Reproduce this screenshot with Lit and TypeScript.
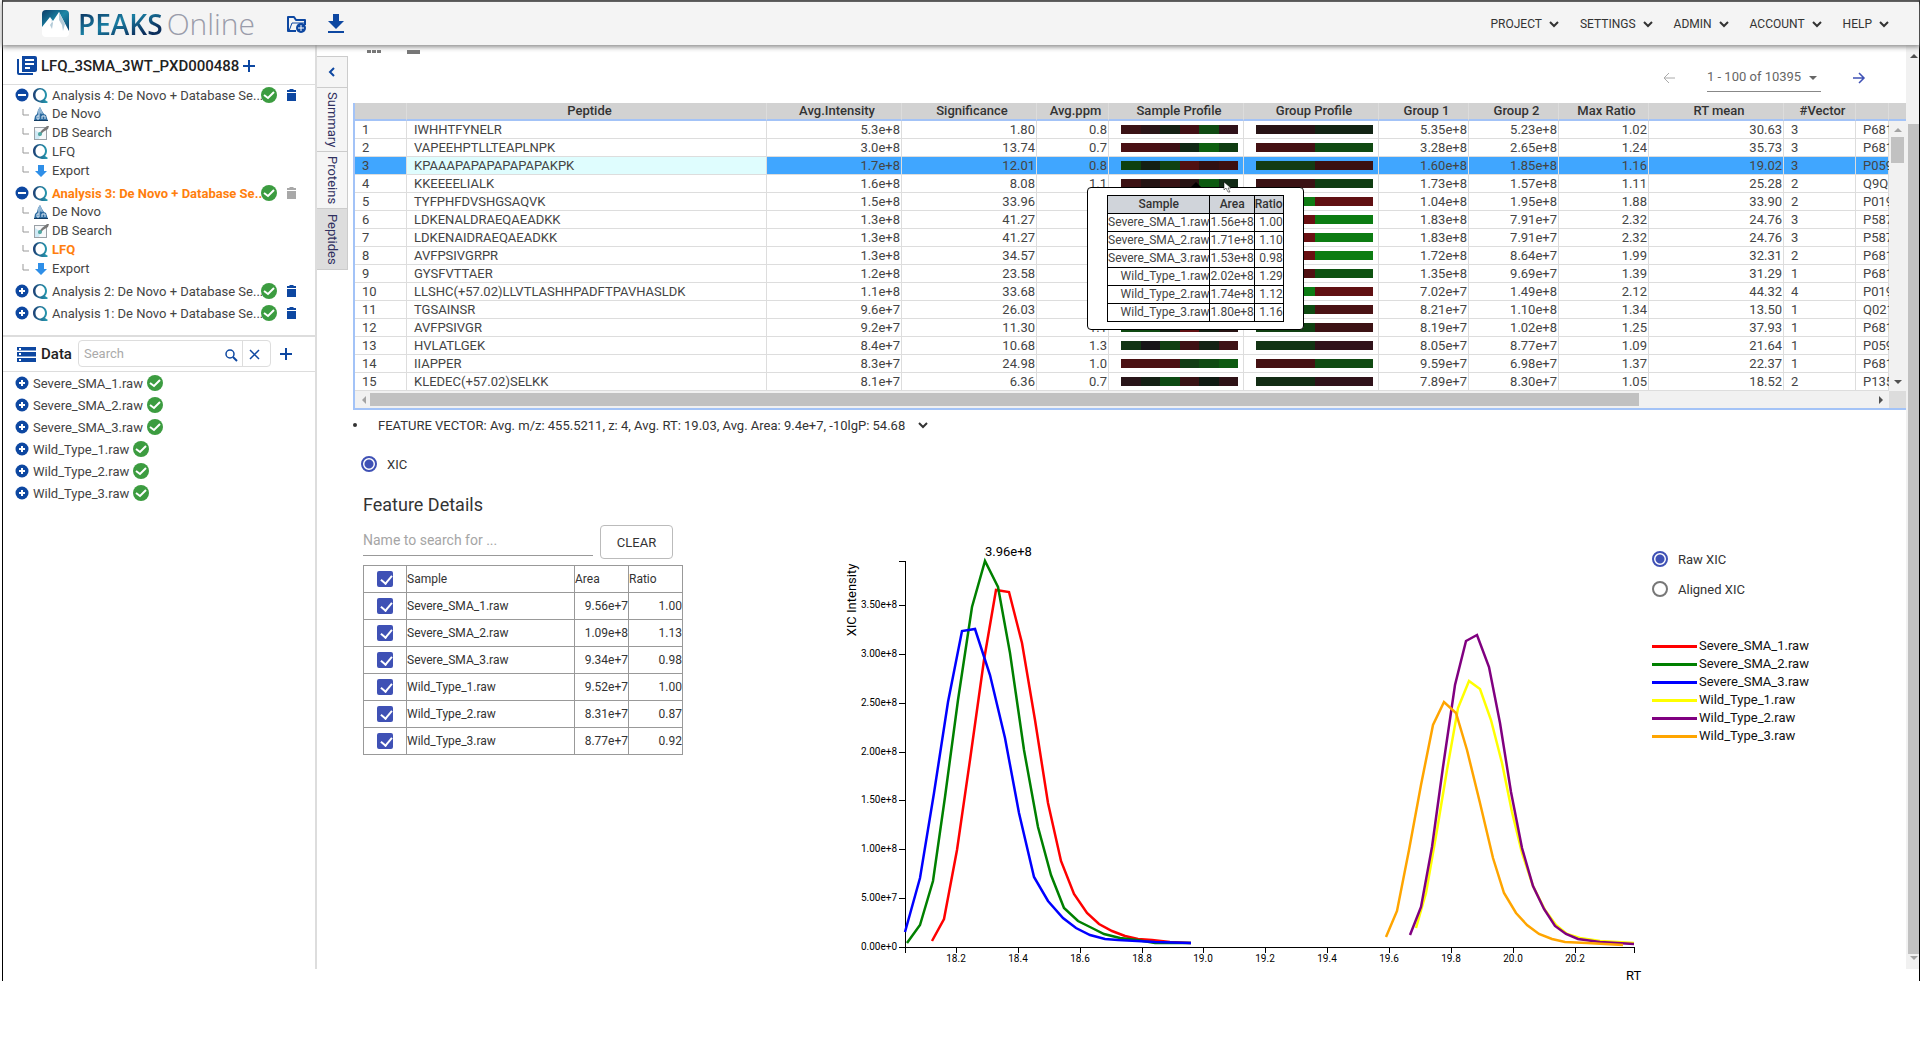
import { LitElement, html, svg, css, nothing } from "lit";
import { customElement, property, state } from "lit/decorators.js";
import { classMap } from "lit/directives/class-map.js";

const BLUE = "#0d47a1";

const icons = {
  logo: svg`
    <defs>
      <linearGradient id="sky" x1="0" y1="0" x2="1" y2="1">
        <stop offset="0" stop-color="#0b3c68" /><stop offset="0.5" stop-color="#1c87a6" /><stop offset="1" stop-color="#0b3c68" />
      </linearGradient>
    </defs>
    <path d="M4 0h19a4 4 0 0 1 4 4v18H0V4a4 4 0 0 1 4-4z" fill="url(#sky)" />
    <path d="M0 17 8 7l3 4 6-9 10 19v2a4 4 0 0 1-4 4H4a4 4 0 0 1-4-4z" fill="#fff" />
    <path d="m8 7 2 5-2 3 2 4 1-6zM17 2v8l3 5 1 6 2-7z" fill="#b4cbd8" />
  `,
  folder: svg`
    <path d="M10 16H2V2h6l2 3h9v5" fill="none" stroke=${BLUE} stroke-width="2" stroke-linejoin="round" />
    <path d="M3 16 6 8h14" fill="none" stroke=${BLUE} stroke-width="1" />
    <circle cx="15" cy="13" r="5" fill=${BLUE} />
    <path d="M15 10v6M12 13h6" stroke="#fff" stroke-width="1" />
  `,
  download: svg`<path d="M5 0h6v7h5l-8 8-8-8h5zM0 17h16v2H0z" fill=${BLUE} />`,
  library: svg`
    <path d="M5 0h13a2 2 0 0 1 2 2v12a2 2 0 0 1-2 2H5z" fill=${BLUE} />
    <path d="M1 3v14a1 1 0 0 0 1 1h14" fill="none" stroke=${BLUE} stroke-width="2" />
    <path d="M8 4h9M8 8h9M8 12h5" stroke="#fff" stroke-width="2" />
  `,
  plus: svg`<path d="M6 0v12M0 6h12" stroke=${BLUE} stroke-width="2" />`,
  minusDot: svg`<circle cx="7" cy="7" r="6.500" fill=${BLUE} /><path d="M3 7h8" stroke="#fff" stroke-width="2" />`,
  plusDot: svg`<circle cx="7" cy="7" r="6.500" fill=${BLUE} /><path d="M4 7h6M7 4v6" stroke="#fff" stroke-width="2" />`,
  quant: svg`
    <defs>
      <linearGradient id="q"><stop offset="0" stop-color="#1d3f74" /><stop offset="1" stop-color="#27a0b4" /></linearGradient>
    </defs>
    <path fill-rule="evenodd" fill="url(#q)" d="M7 0c4 0 7 3 7 7 0 2-1 4-2 5l3 2-1 1H9C4 14 0 12 0 7c0-4 3-7 7-7zM7 1.500C4.500 1.500 2.500 4 2.500 7S4.500 12.500 7 12.500s5-2.500 5-5.500-2-5.500-5-5.500z" />
  `,
  deNovo: svg`
    <path d="m0 14 1-5 2-2 1-4 2-3 2 4 2 3 2 1 2 6z" fill="#2c6ba0" />
    <path d="m4 3 2-3 2 4 1 3-5-1z" fill="#8fb6d6" />
    <path d="M0 13h14v1H0z" fill="#123c63" />
    <path d="M5 6v6H3V9h2M8 12V9h3v3" fill="none" stroke="#dcebf7" />
  `,
  dbSearch: svg`
    <rect x="0.500" y="1.500" width="12" height="12" fill="#f6f8fa" stroke="#9aa0a6" />
    <path d="m1 4 6 4-2 5H1z" fill="#cfe9f5" />
    <path d="m4 9 4-5 5-4h2l-1 3-5 3-3 4z" fill="#777" />
    <circle cx="6" cy="8" r="2" fill="#4fa9a5" />
  `,
  exportArrow: svg`<path d="M3 0h6v6h3l-6 6-6-6h3z" fill="#2f8fe8" />`,
  done: svg`<circle cx="8" cy="8" r="8" fill="#3c9c40" /><path d="m3 8 4 3 6-6" fill="none" stroke="#fff" stroke-width="2" />`,
  trash: svg`<path d="M0 1h2l1-1h3l1 1h2v2H0zM0 4h9v8H0z" fill="currentColor" />`,
  storage: svg`
    <path d="M0 0h19v4H0zM0 5h19v5H0zM0 11h19v4H0z" fill=${BLUE} />
    <path d="M2 2h2M2 7h2M2 13h2" stroke="#fff" stroke-width="2" />
    <path d="M0 4h19M0 10h19" stroke="#fff" />
  `,
  search: svg`<circle cx="5" cy="5" r="4" fill="none" stroke=${BLUE} stroke-width="1.500" /><path d="m8 8 4 4" stroke=${BLUE} stroke-width="2" />`,
  cross: svg`<path d="m0 0 9 9M9 0 0 9" stroke=${BLUE} stroke-width="1.500" />`,
  chevronDown: svg`<path d="m1 1 4 4 4-4" fill="none" stroke="currentColor" stroke-width="2" />`,
  chevronLeft: svg`<path d="M6 1 2 5l4 4" fill="none" stroke=${BLUE} stroke-width="2" />`,
  arrowLeft: svg`<path d="M12 6H1M6 1 1 6l5 5" fill="none" stroke="currentColor" stroke-width="1" />`,
  arrowRight: svg`<path d="M0 6h11M6 1l5 5-5 5" fill="none" stroke="currentColor" stroke-width="1.500" />`,
  branch: svg`<path d="M1 0v6h6" fill="none" stroke="#999" />`,
  cursor: svg`<path d="M0 0v8l2-2 2 4h2L4 6h3z" fill="#fff" stroke="#000" stroke-width="0.500" />`,
};

const icon = (name: keyof typeof icons, width: number, height: number) =>
  html`<svg class="icon" width=${width} height=${height} viewBox="0 0 ${width} ${height}" aria-hidden="true">${icons[name]}</svg>`;

const base = css`
  * {
    box-sizing: border-box;
  }
  button,
  input,
  select {
    font: inherit;
    color: inherit;
    margin: 0;
    padding: 0;
    border: 0;
    background: none;
    outline: none;
  }
  button {
    display: inline-flex;
    align-items: center;
    cursor: pointer;
  }
  a {
    color: inherit;
    text-decoration: none;
  }
  .icon {
    display: block;
    flex: none;
    overflow: visible;
  }
  input[type="radio"] {
    appearance: none;
    width: 16px;
    height: 16px;
    border: 2px solid #777;
    border-radius: 50%;
  }
  input[type="radio"]:checked {
    border-color: #3f51b5;
    background: radial-gradient(circle, #3f51b5 4px, #fff 5px);
  }
  .radio {
    display: flex;
    align-items: center;
    gap: 10px;
  }
`;

@customElement("peaks-header")
export class PeaksHeader extends LitElement {
  static styles = [
    base,
    css`
      :host {
        display: flex;
        align-items: center;
        justify-content: space-between;
        position: relative;
        z-index: 2;
        height: 43px;
        padding: 0 30px 0 39px;
        background: #f4f4f4;
        box-shadow: 0 1px 5px 1px #888;
      }
      .brand,
      .menu {
        display: flex;
        align-items: center;
      }
      .name {
        display: flex;
        gap: 4px;
        margin: 0 31px 0 9px;
        font: 600 28px/38px "Open Sans", sans-serif;
      }
      .peaks {
        background: linear-gradient(160deg, #0b2f5c 10%, #1a7fa3 45%, #0b2f5c 75%);
        background-clip: text;
        color: transparent;
      }
      .online {
        font-size: 30px;
        font-weight: 300;
        color: #9a9caa;
      }
      .tools {
        display: flex;
        align-items: center;
        gap: 22px;
      }
      .menu {
        gap: 21px;
        font-size: 12px;
        color: #333;
      }
      .menu button {
        gap: 7px;
      }
    `,
  ];

  render() {
    return html`
      <a class="brand" href="#">
        ${icon("logo", 27, 27)}
        <span class="name"><span class="peaks">PEAKS</span><span class="online">Online</span></span>
        <span class="tools">${icon("folder", 20, 18)} ${icon("download", 16, 19)}</span>
      </a>
      <nav class="menu">
        ${["PROJECT", "SETTINGS", "ADMIN", "ACCOUNT", "HELP"].map(
          (m) => html`<button>${m}${icon("chevronDown", 10, 6)}</button>`
        )}
      </nav>
    `;
  }
}

@customElement("project-sidebar")
export class ProjectSidebar extends LitElement {
  static styles = [
    base,
    css`
      :host {
        display: block;
        width: 314px;
        flex: none;
        margin-bottom: 12px;
        border-right: 2px solid #ddd;
        font-size: 13px;
        color: #444;
      }
      .title,
      .data-title {
        display: flex;
        align-items: center;
        padding-left: 14px;
        border-bottom: 1px solid #ddd;
        font-size: 15px;
        font-weight: 500;
        color: #222;
      }
      .title {
        height: 40px;
        padding-top: 2px;
        gap: 4px;
      }
      .tree {
        padding: 1px 0 13px 12px;
        border-bottom: 2px solid #ddd;
      }
      .analysis,
      .step {
        display: flex;
        align-items: center;
        height: 19px;
        gap: 4px;
      }
      .analysis {
        height: 18px;
      }
      .step + .analysis,
      .analysis + .analysis {
        margin-top: 4px;
      }
      .analysis a {
        width: 205px;
        white-space: nowrap;
      }
      .analysis button {
        color: #0d47a1;
      }
      .analysis .status {
        margin-right: 6px;
      }
      .step {
        padding-left: 7px;
      }
      .glyph {
        display: flex;
        justify-content: center;
        width: 15px;
      }
      .selected {
        font-weight: 700;
        color: #ff7f0e;
      }
      .analysis.active a {
        font-weight: 700;
        color: #ff7f0e;
      }
      .analysis.active .delete {
        color: #a8a8a8;
      }
      .data-title {
        height: 35px;
        gap: 5px;
      }
      .search {
        display: flex;
        width: 193px;
        height: 27px;
        margin: 0 4px 2px 1px;
        border: 1px solid #ddd;
        border-radius: 4px;
        font-size: 13px;
        font-weight: 400;
      }
      .search input {
        flex: 1;
        min-width: 0;
        padding-left: 5px;
      }
      .search input::placeholder {
        color: #aaa;
      }
      .search button {
        padding: 3px 5px 0;
      }
      .search button + button {
        width: 28px;
        padding-left: 7px;
        border-left: 1px solid #ddd;
      }
      .files {
        list-style: none;
        margin: 0;
        padding: 0 0 0 12px;
      }
      .files li {
        display: flex;
        align-items: center;
        height: 22px;
        gap: 4px;
      }
    `,
  ];

  @state() selected = "3/LFQ";

  analyses = [
    { id: 4, open: true },
    { id: 3, open: true },
    { id: 2, open: false },
    { id: 1, open: false },
  ];

  files = ["Severe_SMA_1.raw", "Severe_SMA_2.raw", "Severe_SMA_3.raw", "Wild_Type_1.raw", "Wild_Type_2.raw", "Wild_Type_3.raw"];

  renderStep(id: number, name: string, glyph: unknown) {
    const key = `${id}/${name}`;
    return html`
      <div class="step">
        ${icon("branch", 7, 10)}
        <span class="glyph">${glyph}</span>
        <a href="#" class=${classMap({ selected: key === this.selected })}>${name}</a>
      </div>
    `;
  }

  render() {
    return html`
      <div class="title">
        ${icon("library", 20, 19)}
        <span>LFQ_3SMA_3WT_PXD000488</span>
        <button aria-label="Add analysis">${icon("plus", 12, 12)}</button>
      </div>
      <div class="tree">
        ${this.analyses.map(
          (a) => html`
            <div class=${classMap({ analysis: true, active: this.selected.startsWith(`${a.id}/`) })}>
              <button aria-label="Toggle">${icon(a.open ? "minusDot" : "plusDot", 14, 14)}</button>
              ${icon("quant", 15, 15)}
              <a href="#">Analysis ${a.id}: De Novo + Database Se...</a>
              <span class="status">${icon("done", 16, 16)}</span>
              <button class="delete" aria-label="Delete">${icon("trash", 9, 12)}</button>
            </div>
            ${a.open
              ? [
                  this.renderStep(a.id, "De Novo", icon("deNovo", 14, 14)),
                  this.renderStep(a.id, "DB Search", icon("dbSearch", 14, 14)),
                  this.renderStep(a.id, "LFQ", icon("quant", 15, 15)),
                  this.renderStep(a.id, "Export", icon("exportArrow", 12, 12)),
                ]
              : nothing}
          `
        )}
      </div>
      <div class="data-title">
        ${icon("storage", 19, 15)}
        <span>Data</span>
        <div class="search">
          <input placeholder="Search" aria-label="Search data" />
          <button aria-label="Search">${icon("search", 12, 12)}</button>
          <button aria-label="Clear">${icon("cross", 9, 9)}</button>
        </div>
        <button aria-label="Add data">${icon("plus", 12, 12)}</button>
      </div>
      <ul class="files">
        ${this.files.map(
          (f) => html`<li><button aria-label="Expand">${icon("plusDot", 14, 14)}</button>${f}${icon("done", 16, 16)}</li>`
        )}
      </ul>
    `;
  }
}

// row: number, peptide, avg intensity, significance, ppm, group 1, group 2, max ratio, rt, vectors, accession, sample colours, group colours
type Row = [number, string, string, string, string, string, string, string, string, number, string, string, string];

const ROWS: Row[] = [
  [1, "IWHHTFYNELR", "5.3e+8", "1.80", "0.8", "5.35e+8", "5.23e+8", "1.02", "30.63", 3, "P681", "3a1215 2a1518 142014 401014 0f4a12 30121a", "281315 122414"],
  [2, "VAPEEHPTLLTEAPLNPK", "3.0e+8", "13.74", "0.7", "3.28e+8", "2.65e+8", "1.24", "35.73", 3, "P681", "4a1014 4a1014 3c1014 102814 0d6010 0f3d12", "441012 104a12"],
  [3, "KPAAAPAPAPAPAPAPAKPK", "1.7e+8", "12.01", "0.8", "1.60e+8", "1.85e+8", "1.16", "19.02", 3, "P059", "0d400f 141f14 0f4212 501012 301012 3c1010", "123c14 3a1010"],
  [4, "KKEEEELIALK", "1.6e+8", "8.08", "1.1", "1.73e+8", "1.57e+8", "1.11", "25.28", 2, "Q9Q", "3c1214 241414 381214 281414 0c5a10 122a16", "3a1214 0f3d12"],
  [5, "TYFPHFDVSHGSAQVK", "1.5e+8", "33.96", "1.0", "1.04e+8", "1.95e+8", "1.88", "33.90", 2, "P019", "107c14 0d5210 107c14 601012 501012 601012", "107c14 601012"],
  [6, "LDKENALDRAEQAEADKK", "1.3e+8", "41.27", "1.2", "1.83e+8", "7.91e+7", "2.32", "24.76", 3, "P587", "6a1012 6a1012 501012 0c7c12 0c7c12 0d5210", "6a1012 0c7c12"],
  [7, "LDKENAIDRAEQAEADKK", "1.3e+8", "41.27", "1.2", "1.83e+8", "7.91e+7", "2.32", "24.76", 3, "P587", "6a1012 6a1012 501012 0c7c12 0c7c12 0d5210", "6a1012 0c7c12"],
  [8, "AVFPSIVGRPR", "1.3e+8", "34.57", "0.9", "1.72e+8", "8.64e+7", "1.99", "32.31", 2, "P681", "6a1012 501012 6a1012 0c7c12 0d5210 0c7c12", "6a1012 0c7c12"],
  [9, "GYSFVTTAER", "1.2e+8", "23.58", "1.0", "1.35e+8", "9.69e+7", "1.39", "31.29", 1, "P681", "501012 501012 3c1014 0d5210 0d5210 0f3d12", "501012 0d5210"],
  [10, "LLSHC(+57.02)LLVTLASHHPADFTPAVHASLDK", "1.1e+8", "33.68", "1.3", "7.02e+7", "1.49e+8", "2.12", "44.32", 4, "P019", "0d7c14 0d7c14 0d5210 601012 601012 501012", "0d7c14 601012"],
  [11, "TGSAINSR", "9.6e+7", "26.03", "0.9", "8.21e+7", "1.10e+8", "1.34", "13.50", 1, "Q021", "0f4a12 0f4a12 123c14 4a1214 4a1214 3c1014", "0f4a12 4a1214"],
  [12, "AVFPSIVGR", "9.2e+7", "11.30", "1.1", "8.19e+7", "1.02e+8", "1.25", "37.93", 1, "P681", "0f4a12 0f4a12 142014 601012 142214 281414", "104012 3c1214"],
  [13, "HVLATLGEK", "8.4e+7", "10.68", "1.3", "8.05e+7", "8.77e+7", "1.09", "21.64", 1, "P059", "123414 181518 104012 3e1014 142214 3e1216", "123414 30121a"],
  [14, "IIAPPER", "8.3e+7", "24.98", "1.0", "9.59e+7", "6.98e+7", "1.37", "22.37", 1, "P681", "4a1012 4a1012 4a1012 123c14 0f4a12 0d5a10", "441012 104a12"],
  [15, "KLEDEC(+57.02)SELKK", "8.1e+7", "6.36", "0.7", "7.89e+7", "8.30e+7", "1.05", "18.52", 2, "P135", "281418 142014 0d4a12 381214 101a12 2e1216", "122c14 30121a"],
];

@customElement("peptide-table")
export class PeptideTable extends LitElement {
  static styles = [
    base,
    css`
      :host {
        display: block;
        position: relative;
        font-size: 13px;
        line-height: 17px;
        color: #444;
      }
      .clip {
        display: flex;
        overflow: hidden;
      }
      .grid-wrap {
        flex: 1;
        min-width: 0;
        overflow: hidden;
        border-left: 2px solid #a3c3f7;
      }
      .grid {
        width: 100%;
        border-collapse: separate;
        border-spacing: 0;
        table-layout: fixed;
      }
      th {
        height: 18px;
        padding: 0 0 0 6px;
        border-right: 1px solid #dcdcdc;
        border-bottom: 2px solid #a3c3f7;
        background: #d2d2d2;
        line-height: 16px;
        font-weight: 500;
        color: #333;
      }
      td {
        height: 18px;
        padding: 0 1px 0 0;
        border-right: 1px solid #ddd;
        border-bottom: 1px solid #ddd;
        text-align: right;
        white-space: nowrap;
      }
      td.left {
        padding-left: 7px;
        text-align: left;
      }
      .picked td {
        background: #40a6ff;
      }
      .picked td.peptide {
        background: #dffdfe;
      }
      .bar {
        display: grid;
        grid-auto-flow: column;
        grid-auto-columns: 1fr;
        height: 9px;
        margin: 0 4px 0 12px;
      }
      .vscroll {
        display: flex;
        flex-direction: column;
        align-items: center;
        width: 17px;
        background: #f1f1f1;
      }
      .vhead {
        align-self: stretch;
        height: 18px;
        border-bottom: 2px solid #a3c3f7;
        background: #d2d2d2;
      }
      .vthumb {
        width: 13px;
        height: 26px;
        margin: 5px 0 auto;
        background: #c1c1c1;
      }
      .up,
      .down,
      .prev,
      .next {
        border: 4px solid transparent;
      }
      .up {
        margin-top: 3px;
        border-bottom-color: #a3a3a3;
      }
      .down {
        margin-bottom: 3px;
        border-top-color: #505050;
      }
      .hscroll {
        display: flex;
        align-items: center;
        height: 19px;
        padding-left: 3px;
        border: 1px solid #a3c3f7;
        border-width: 0 0 2px 2px;
        background: #f1f1f1;
      }
      .prev {
        border-right-color: #a3a3a3;
      }
      .next {
        margin: 0 2px 0 auto;
        border-left-color: #505050;
      }
      .hthumb {
        width: 82%;
        height: 13px;
        margin-left: 4px;
        background: #c1c1c1;
      }
      .corner {
        width: 17px;
        height: 17px;
        background: #dcdcdc;
      }
      /* floats over the profile cell that the pointer is on */
      .tip {
        position: absolute;
        top: 84px;
        left: 734px;
        padding: 7px 19px;
        border: 1px solid #000;
        border-radius: 4px;
        background: #fff;
        font-size: 12px;
      }
      .tip::before {
        content: "";
        position: absolute;
        top: -6px;
        left: 103px;
        border: 5px solid transparent;
        border-top: 0;
        border-bottom-color: #000;
      }
      .tip table {
        border-collapse: collapse;
      }
      .tip th,
      .tip td {
        padding: 0;
        border: 1px solid #000;
        line-height: 17px;
      }
      .tip th {
        background: #d0d4da;
      }
      .pointer {
        position: absolute;
        top: -6px;
        left: 136px;
      }
    `,
  ];

  @property({ type: Number }) picked = 3;

  columns: [string, number?][] = [
    ["", 52],
    ["Peptide", 360],
    ["Avg.Intensity", 135],
    ["Significance", 135],
    ["Avg.ppm", 72],
    ["Sample Profile", 135],
    ["Group Profile", 135],
    ["Group 1", 90],
    ["Group 2", 90],
    ["Max Ratio", 90],
    ["RT mean", 135],
    ["#Vector", 72],
    [""],
  ];

  tip = [
    ["Severe_SMA_1.raw", "1.56e+8", "1.00"],
    ["Severe_SMA_2.raw", "1.71e+8", "1.10"],
    ["Severe_SMA_3.raw", "1.53e+8", "0.98"],
    ["Wild_Type_1.raw", "2.02e+8", "1.29"],
    ["Wild_Type_2.raw", "1.74e+8", "1.12"],
    ["Wild_Type_3.raw", "1.80e+8", "1.16"],
  ];

  renderBar(colors: string) {
    return html`<div class="bar">${colors.split(" ").map((c) => html`<span style="background:#${c}"></span>`)}</div>`;
  }

  render() {
    return html`
      <div class="clip">
        <div class="grid-wrap">
          <table class="grid">
            <colgroup>
              ${this.columns.map(([, w]) => html`<col style=${w ? `width:${w}px` : ""} />`)}
            </colgroup>
            <thead>
              <tr>
                ${this.columns.map(([name]) => html`<th>${name}</th>`)}
              </tr>
            </thead>
            <tbody>
              ${ROWS.map(
                ([n, pep, int, sig, ppm, g1, g2, max, rt, vec, acc, samples, groups]) => html`
                  <tr class=${n === this.picked ? "picked" : ""}>
                    <td class="left">${n}</td>
                    <td class="left peptide">${pep}</td>
                    <td>${int}</td>
                    <td>${sig}</td>
                    <td>${ppm}</td>
                    <td>${this.renderBar(samples)}</td>
                    <td>${this.renderBar(groups)}</td>
                    <td>${g1}</td>
                    <td>${g2}</td>
                    <td>${max}</td>
                    <td>${rt}</td>
                    <td class="left">${vec}</td>
                    <td class="left">${acc}</td>
                  </tr>
                `
              )}
            </tbody>
          </table>
        </div>
        <div class="vscroll">
          <div class="vhead"></div>
          <div class="up"></div>
          <div class="vthumb"></div>
          <div class="down"></div>
        </div>
      </div>
      <div class="hscroll">
        <div class="prev"></div>
        <div class="hthumb"></div>
        <div class="next"></div>
        <div class="corner"></div>
      </div>
      <div class="tip" role="tooltip">
        <table>
          <tr>
            <th>Sample</th>
            <th>Area</th>
            <th>Ratio</th>
          </tr>
          ${this.tip.map((r) => html`<tr>${r.map((c) => html`<td>${c}</td>`)}</tr>`)}
        </table>
        <span class="pointer">${icon("cursor", 7, 10)}</span>
      </div>
    `;
  }
}

const SERIES = [
  { name: "Severe_SMA_1.raw", area: "9.56e+7", ratio: "1.00", color: "red", points: "92,401 104,379 117,310 130,220 144,120 156,50 169,52 182,103 195,180 208,263 221,321 234,354 247,373 259,384 272,391 285,396 298,399 312,400 330,402 351,403" },
  { name: "Severe_SMA_2.raw", area: "1.09e+8", ratio: "1.13", color: "green", points: "67,403 80,385 93,341 105,257 118,160 132,67 145,21 158,47 170,113 184,210 198,287 211,335 224,368 238,381 252,388 264,394 280,398 297,400 315,403 351,403" },
  { name: "Severe_SMA_3.raw", area: "9.34e+7", ratio: "0.98", color: "blue", points: "65,392 80,338 94,253 108,162 122,91 135,89 150,135 165,198 179,273 194,337 208,361 223,378 236,388 250,395 265,399 278,400 297,401 315,402 351,403" },
  { name: "Wild_Type_1.raw", area: "9.52e+7", ratio: "1.00", color: "yellow", points: "576,388 586,353 597,290 607,230 618,168 629,141 640,149 651,180 662,223 672,272 682,313 693,346 705,370 716,385 727,394 740,398 760,401 794,403" },
  { name: "Wild_Type_2.raw", area: "8.31e+7", ratio: "0.87", color: "purple", points: "570,395 581,367 592,307 603,227 615,145 626,101 637,95 649,127 660,183 671,252 682,308 693,346 704,369 715,386 726,394 738,399 760,402 794,404" },
  { name: "Wild_Type_3.raw", area: "8.77e+7", ratio: "0.92", color: "orange", points: "546,397 557,371 569,310 581,245 593,185 604,162 616,173 627,210 640,263 653,318 664,353 676,373 687,385 699,394 712,399 725,402 747,403 783,405" },
];

@customElement("feature-details")
export class FeatureDetails extends LitElement {
  static styles = [
    base,
    css`
      :host {
        display: grid;
        grid-template-columns: 477px 810px 1fr;
        padding-left: 10px;
        font-size: 13px;
        color: #333;
      }
      h2 {
        margin: 0 0 7px;
        font-size: 18px;
        line-height: 26px;
        font-weight: 400;
      }
      .filter {
        display: flex;
        gap: 7px;
        height: 34px;
        margin-bottom: 6px;
        font-size: 14px;
      }
      .filter input {
        width: 230px;
        height: 31px;
        border-bottom: 1px solid #999;
      }
      .filter input::placeholder {
        color: #a5a5a5;
      }
      .filter button {
        justify-content: center;
        width: 73px;
        border: 1px solid #bbb;
        border-radius: 4px;
        font-size: 13px;
      }
      table {
        width: 320px;
        border-collapse: collapse;
        table-layout: fixed;
        font-size: 12px;
      }
      th,
      td {
        height: 27px;
        padding: 0;
        border: 1px solid #999;
        font-weight: 400;
        text-align: left;
      }
      .num {
        text-align: right;
      }
      .tick {
        width: 43px;
        text-align: center;
      }
      .area,
      .ratio {
        width: 54px;
      }
      input[type="checkbox"] {
        appearance: none;
        display: inline-block;
        position: relative;
        width: 16px;
        height: 16px;
        border: 2px solid #777;
        border-radius: 2px;
        vertical-align: middle;
      }
      input[type="checkbox"]:checked {
        border-color: #3f51b5;
        background: #3f51b5;
      }
      input[type="checkbox"]:checked::before {
        content: "";
        position: absolute;
        top: 0;
        left: 4px;
        width: 5px;
        height: 9px;
        border: solid #fff;
        border-width: 0 2px 2px 0;
        transform: rotate(40deg);
      }
      .chart {
        display: block;
        font-size: 10px;
      }
      .chart .big {
        font-size: 13px;
      }
      .side {
        padding: 52px 0 0 2px;
      }
      .radio {
        height: 30px;
      }
      .legend {
        margin: 33px 0 0;
        padding: 0;
        list-style: none;
        line-height: 18px;
        color: #111;
      }
      .legend li {
        display: flex;
        align-items: center;
        gap: 2px;
      }
      .swatch {
        width: 45px;
        height: 3px;
      }
    `,
  ];

  @state() mode = "raw";

  // pixels from the chart origin: RT 18.2 sits at 116, every 0.2 min is 62
  xTicks = ["18.2", "18.4", "18.6", "18.8", "19.0", "19.2", "19.4", "19.6", "19.8", "20.0", "20.2"];
  yTicks = ["0.00e+0", "5.00e+7", "1.00e+8", "1.50e+8", "2.00e+8", "2.50e+8", "3.00e+8", "3.50e+8"];

  renderChart() {
    return html`
      <svg class="chart" width="810" height="489" viewBox="0 -48 810 489" role="img" aria-label="XIC">
        <path d="M59 21h6v386h-6M65 413v-6h729v6" fill="none" stroke="#000" shape-rendering="crispEdges" />
        ${this.xTicks.map((t, i) => {
          const x = 116 + Math.round(i * 61.85);
          return svg`<path d="M${x} 407v6" stroke="#000" shape-rendering="crispEdges" /><text x=${x} y="422" text-anchor="middle">${t}</text>`;
        })}
        ${this.yTicks.map((t, i) => {
          const y = 407 - Math.round(i * 48.85);
          return svg`<path d="M59 ${y}h6" stroke="#000" shape-rendering="crispEdges" /><text x="57" y=${y + 3} text-anchor="end">${t}</text>`;
        })}
        ${SERIES.map((s) => svg`<polyline points=${s.points} fill="none" stroke=${s.color} stroke-width="2.5" />`)}
        <text class="big" x="145" y="16">3.96e+8</text>
        <text class="big" x="786" y="440">RT</text>
        <text class="big" text-anchor="middle" transform="translate(16 60) rotate(-90)">XIC Intensity</text>
      </svg>
    `;
  }

  renderMode(value: string, label: string) {
    return html`
      <label class="radio">
        <input type="radio" name="mode" .checked=${this.mode === value} @change=${() => (this.mode = value)} />${label}
      </label>
    `;
  }

  render() {
    return html`
      <div>
        <h2>Feature Details</h2>
        <div class="filter">
          <input placeholder="Name to search for ..." aria-label="Name to search for" />
          <button>CLEAR</button>
        </div>
        <table>
          <tr>
            <th class="tick"><input type="checkbox" checked aria-label="All samples" /></th>
            <th>Sample</th>
            <th class="area">Area</th>
            <th class="ratio">Ratio</th>
          </tr>
          ${SERIES.map(
            (s) => html`
              <tr>
                <td class="tick"><input type="checkbox" checked aria-label=${s.name} /></td>
                <td>${s.name}</td>
                <td class="num">${s.area}</td>
                <td class="num">${s.ratio}</td>
              </tr>
            `
          )}
        </table>
      </div>
      ${this.renderChart()}
      <div class="side">
        ${this.renderMode("raw", "Raw XIC")} ${this.renderMode("aligned", "Aligned XIC")}
        <ul class="legend">
          ${SERIES.map((s) => html`<li><span class="swatch" style="background:${s.color}"></span>${s.name}</li>`)}
        </ul>
      </div>
    `;
  }
}

@customElement("app-root")
export class AppRoot extends LitElement {
  static styles = [
    base,
    css`
      :host {
        display: block;
        margin-left: 2px;
        border: 1px solid #000;
        border-top: 2px solid #444;
        border-bottom: 0;
        background: #fff;
        font-family: Roboto, "Liberation Sans", sans-serif;
        color: #333;
      }
      .body {
        display: flex;
      }
      .tabs {
        display: flex;
        flex-direction: column;
        flex: none;
        width: 31px;
        padding-top: 11px;
      }
      .tabs button {
        justify-content: center;
        width: 31px;
        height: 57px;
        border: 1px solid #ccc;
        border-width: 0 1px 1px 0;
        background: #f5f5f5;
        font-size: 13px;
        writing-mode: vertical-rl;
        color: #303060;
      }
      .tabs .collapse {
        height: 32px;
        border-top-width: 1px;
      }
      .tabs .tall {
        height: 64px;
      }
      .tabs .current {
        height: 61px;
        background: #ddd;
      }
      main {
        flex: 1;
        min-width: 0;
        padding-left: 5px;
      }
      .toolbar {
        display: flex;
        align-items: flex-start;
        height: 58px;
        padding: 5px 41px 0 14px;
        gap: 26px;
        color: #666;
      }
      .dots {
        width: 14px;
        height: 3px;
        background: repeating-linear-gradient(90deg, #777 0 4px, #fff 4px 5px);
      }
      .image {
        width: 13px;
        height: 4px;
        background: #777;
      }
      .pager {
        display: flex;
        align-items: center;
        gap: 32px;
        margin: 14px 0 0 auto;
        font-size: 13px;
      }
      .pager .back {
        color: #aaa;
      }
      .pager .forward {
        color: #3f51b5;
      }
      .range {
        position: relative;
      }
      .range select {
        appearance: none;
        width: 114px;
        height: 28px;
        padding-bottom: 2px;
        border-bottom: 1px solid #888;
      }
      .range::after {
        content: "";
        position: absolute;
        top: 12px;
        right: 4px;
        border: 4px solid transparent;
        border-top-color: #666;
        border-bottom: 0;
      }
      .vector {
        display: flex;
        align-items: center;
        height: 30px;
        gap: 13px;
        font-size: 13px;
      }
      .vector::before {
        content: "";
        width: 4px;
        height: 4px;
        margin-right: 8px;
        border-radius: 50%;
        background: #333;
      }
      .xic {
        height: 48px;
        margin-bottom: 4px;
        padding-left: 8px;
        font-size: 13px;
      }
      .scrollbar {
        display: flex;
        flex-direction: column;
        align-items: center;
        flex: none;
        width: 13px;
        margin-bottom: 12px;
        padding: 5px 0 5px 2px;
        background: #f1f1f1;
      }
      .scrollbar .thumb {
        align-self: stretch;
        flex: 1;
        margin: 66px 0 2px;
        background: #c1c1c1;
      }
      .up,
      .down {
        border: 4px solid transparent;
      }
      .up {
        border-bottom-color: #505050;
      }
      .down {
        border-top-color: #a3a3a3;
      }
    `,
  ];

  render() {
    return html`
      <peaks-header></peaks-header>
      <div class="body">
        <project-sidebar></project-sidebar>
        <nav class="tabs">
          <button class="collapse" aria-label="Collapse">${icon("chevronLeft", 8, 10)}</button>
          <button class="tall">Summary</button>
          <button>Proteins</button>
          <button class="current">Peptides</button>
        </nav>
        <main>
          <div class="toolbar">
            <div class="dots"></div>
            <div class="image"></div>
            <div class="pager">
              <button class="back" aria-label="Previous page">${icon("arrowLeft", 12, 12)}</button>
              <label class="range">
                <select aria-label="Page">
                  <option>1 - 100 of 10395</option>
                </select>
              </label>
              <button class="forward" aria-label="Next page">${icon("arrowRight", 12, 12)}</button>
            </div>
          </div>
          <peptide-table></peptide-table>
          <div class="vector">
            <span>FEATURE VECTOR: Avg. m/z: 455.5211, z: 4, Avg. RT: 19.03, Avg. Area: 9.4e+7, -10lgP: 54.68</span>
            ${icon("chevronDown", 10, 6)}
          </div>
          <label class="radio xic"><input type="radio" name="view" checked />XIC</label>
          <feature-details></feature-details>
        </main>
        <div class="scrollbar">
          <div class="up"></div>
          <div class="thumb"></div>
          <div class="down"></div>
        </div>
      </div>
    `;
  }
}
